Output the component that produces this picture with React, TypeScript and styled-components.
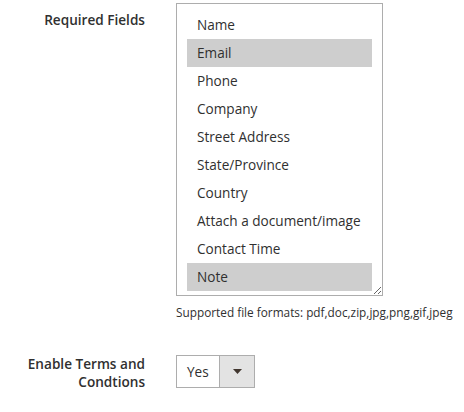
import React from "react";
import styled, { createGlobalStyle } from "styled-components";

const GlobalStyle = createGlobalStyle`
    html, body {
        margin: 0;
        padding: 0;
        background: #fff;
    }
    body {
        font-family: "Open Sans", "Noto Sans", sans-serif;
        color: #303030;
    }
`;

const Form = styled.div`
    padding-top: 3px;
    display: grid;
    grid-template-columns: 145px 1fr;
    column-gap: 31px;
    row-gap: 35px;
`;

const Label = styled.div<{ $top?: number }>`
    text-align: right;
    font-size: 13.6px;
    font-weight: 600;
    line-height: 18px;
    padding-top: ${(p) => p.$top ?? 0}px;
    color: #303030;
`;

const Control = styled.div`
    display: flex;
    flex-direction: column;
    align-items: flex-start;
`;

const ListBox = styled.div`
    box-sizing: border-box;
    width: 207px;
    height: 293px;
    border: 1px solid #adadad;
    padding: 7px 10px 4px;
    resize: both;
    overflow: hidden;
`;

const Option = styled.div<{ $selected?: boolean }>`
    height: 28px;
    line-height: 28px;
    padding: 0 10px;
    font-size: 13.6px;
    color: #303030;
    white-space: nowrap;
    background: ${(p) => (p.$selected ? "#cecece" : "transparent")};
`;

const Note = styled.div`
    margin-top: 8px;
    font-size: 11.8px;
    line-height: 16px;
    color: #303030;
`;

const Select = styled.div`
    box-sizing: border-box;
    display: flex;
    height: 33px;
    width: 79px;
    border: 1px solid #adadad;
`;

const SelectValue = styled.div`
    flex: 1;
    padding-left: 10px;
    font-size: 13.6px;
    line-height: 31px;
    color: #303030;
`;

const SelectArrow = styled.div`
    width: 34px;
    display: flex;
    align-items: center;
    justify-content: center;
    background: #e3e3e3;
    border-left: 1px solid #adadad;
`;

const fields = [
    { name: "Name" },
    { name: "Email", selected: true },
    { name: "Phone" },
    { name: "Company" },
    { name: "Street Address" },
    { name: "State/Province" },
    { name: "Country" },
    { name: "Attach a document/image" },
    { name: "Contact Time" },
    { name: "Note", selected: true },
];

const App = () => {
    return (
        <>
            <GlobalStyle />
            <Form>
                <Label $top={8}>Required Fields</Label>
                <Control>
                    <ListBox>
                        {fields.map((f) => (
                            <Option key={f.name} $selected={f.selected}>
                                {f.name}
                            </Option>
                        ))}
                    </ListBox>
                    <Note>Supported file formats: pdf,doc,zip,jpg,png,gif,jpeg</Note>
                </Control>

                <Label>
                    Enable Terms and
                    <br />
                    Condtions
                </Label>
                <Control>
                    <Select>
                        <SelectValue>Yes</SelectValue>
                        <SelectArrow>
                            <svg width="9" height="5" viewBox="0 0 9 5">
                                <path d="M0 0h9L4.5 5z" fill="#41362f" />
                            </svg>
                        </SelectArrow>
                    </Select>
                </Control>
            </Form>
        </>
    );
};

export default App;
